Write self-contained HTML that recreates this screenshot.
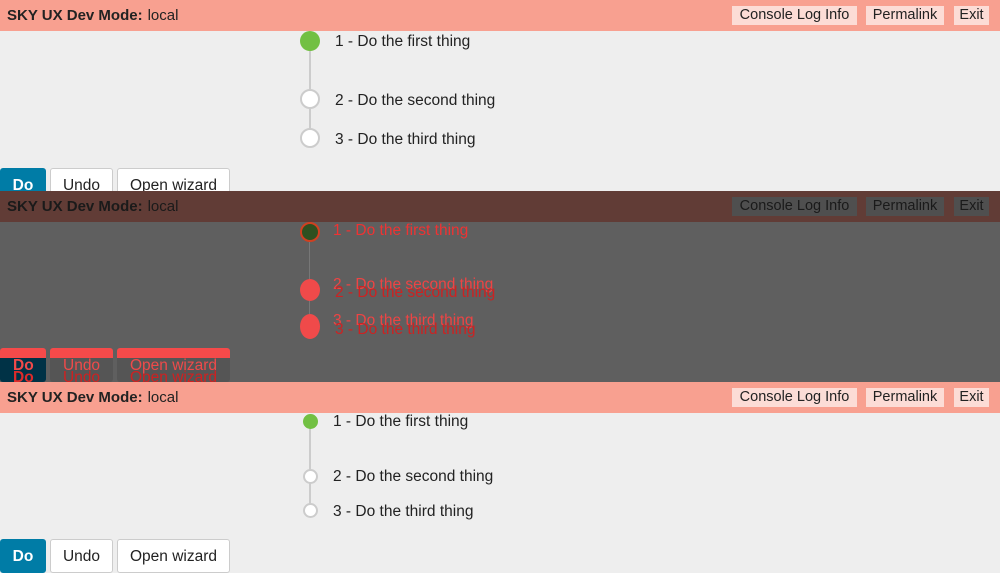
<!DOCTYPE html>
<html><head><style>
*{margin:0;padding:0;box-sizing:border-box}
body{width:1000px;height:573px;position:relative;overflow:hidden;font-family:"Liberation Sans",sans-serif;background:#eee;color:#222}
.a{position:absolute}
.ban{position:absolute;left:0;width:1000px;height:31px;background:#f8a090;font-size:15px}
.ban .t{position:absolute;left:7px;top:7px}
.ban b{margin-right:5px}
.bb{position:absolute;top:6px;height:19px;background:#fcdcd6;font-size:14.5px;line-height:19px;text-align:center}
.txt{position:absolute;font-size:15.5px;color:#222;white-space:nowrap}
.btn{position:absolute;height:34px;border:1px solid #ccc;background:#fff;border-radius:3px;font-size:15.5px;text-align:center;line-height:33px}
.circ{position:absolute;border-radius:50%}
</style></head><body>
<!-- panel 1 -->
<div class="a" style="left:0;top:0;width:1000px;height:191px;overflow:hidden">
 <div class="ban" style="top:0"><div class="t"><b>SKY UX Dev Mode:</b>local</div>
  <div class="bb" style="left:732px;width:125px">Console Log Info</div>
  <div class="bb" style="left:866px;width:78px">Permalink</div>
  <div class="bb" style="left:954px;width:35px">Exit</div></div>
 <div class="a" style="left:309px;top:50px;width:2px;height:80px;background:#ccc"></div>
 <div class="circ" style="left:300px;top:31px;width:20px;height:20px;background:#72c043"></div>
 <div class="circ" style="left:300px;top:89px;width:20px;height:20px;background:#fff;border:2px solid #ccc"></div>
 <div class="circ" style="left:300px;top:128px;width:20px;height:20px;background:#fff;border:2px solid #ccc"></div>
 <div class="txt" style="left:335px;top:33px">1 - Do the first thing</div>
 <div class="txt" style="left:335px;top:92px">2 - Do the second thing</div>
 <div class="txt" style="left:335px;top:131px">3 - Do the third thing</div>
 <div class="btn" style="left:0;top:168px;width:46px;background:#007ca6;border-color:#007ca6;color:#fff;font-weight:bold">Do</div>
 <div class="btn" style="left:50px;top:168px;width:63px">Undo</div>
 <div class="btn" style="left:117px;top:168px;width:113px">Open wizard</div>
</div>
<!-- panel 2 diff -->
<div class="a" style="left:0;top:191px;width:1000px;height:191px;overflow:hidden;background:#5f5f5f">
 <div class="ban" style="top:0;background:#613c36;color:#1a1a1a"><div class="t"><b>SKY UX Dev Mode:</b>local</div>
  <div class="bb" style="left:732px;width:125px;background:#4f4f4f">Console Log Info</div>
  <div class="bb" style="left:866px;width:78px;background:#4f4f4f">Permalink</div>
  <div class="bb" style="left:954px;width:35px;background:#4f4f4f">Exit</div></div>
 <div class="a" style="left:309px;top:50px;width:1px;height:80px;background:#777"></div>
 <div class="circ" style="left:300px;top:31px;width:20px;height:20px;background:#2e5020;border:2px solid #d04020"></div>
 <div class="circ" style="left:300px;top:88px;width:20px;height:22px;background:#f04a4a"></div>
 <div class="circ" style="left:300px;top:123px;width:20px;height:25px;background:#f04a4a"></div>
 <div class="txt" style="left:333px;top:31px;color:#ee3333">1 - Do the first thing</div>
 <div class="txt" style="left:333px;top:85px;color:#ee4444">2 - Do the second thing</div>
 <div class="txt" style="left:335px;top:93px;color:#cc2222">2 - Do the second thing</div>
 <div class="txt" style="left:333px;top:121px;color:#ee4444">3 - Do the third thing</div>
 <div class="txt" style="left:335px;top:130px;color:#cc2222">3 - Do the third thing</div>
 <div class="a" style="left:0;top:157px;width:46px;height:34px;background:#003246;border-top:10px solid #f54a4a;border-radius:3px"></div>
 <div class="a" style="left:50px;top:157px;width:63px;height:34px;background:#555;border-top:10px solid #f54a4a;border-radius:3px"></div>
 <div class="a" style="left:117px;top:157px;width:113px;height:34px;background:#555;border-top:10px solid #f54a4a;border-radius:3px"></div>
 <div class="txt" style="left:13px;top:166px;color:#f04a4a;font-weight:bold">Do</div>
 <div class="txt" style="left:13px;top:178px;color:#e02a2a;font-weight:bold">Do</div>
 <div class="txt" style="left:63px;top:166px;color:#f04a4a">Undo</div>
 <div class="txt" style="left:63px;top:178px;color:#d02020">Undo</div>
 <div class="txt" style="left:130px;top:166px;color:#f04a4a">Open wizard</div>
 <div class="txt" style="left:130px;top:178px;color:#d02020">Open wizard</div>
</div>
<!-- panel 3 -->
<div class="a" style="left:0;top:382px;width:1000px;height:191px;overflow:hidden">
 <div class="ban" style="top:0"><div class="t"><b>SKY UX Dev Mode:</b>local</div>
  <div class="bb" style="left:732px;width:125px">Console Log Info</div>
  <div class="bb" style="left:866px;width:78px">Permalink</div>
  <div class="bb" style="left:954px;width:35px">Exit</div></div>
 <div class="a" style="left:309px;top:46px;width:2px;height:82px;background:#ccc"></div>
 <div class="circ" style="left:303px;top:32px;width:15px;height:15px;background:#72c043"></div>
 <div class="circ" style="left:303px;top:87px;width:15px;height:15px;background:#fff;border:2px solid #ccc"></div>
 <div class="circ" style="left:303px;top:121px;width:15px;height:15px;background:#fff;border:2px solid #ccc"></div>
 <div class="txt" style="left:333px;top:31px">1 - Do the first thing</div>
 <div class="txt" style="left:333px;top:86px">2 - Do the second thing</div>
 <div class="txt" style="left:333px;top:121px">3 - Do the third thing</div>
 <div class="btn" style="left:0;top:157px;width:46px;background:#007ca6;border-color:#007ca6;color:#fff;font-weight:bold">Do</div>
 <div class="btn" style="left:50px;top:157px;width:63px">Undo</div>
 <div class="btn" style="left:117px;top:157px;width:113px">Open wizard</div>
</div>
</body></html>
